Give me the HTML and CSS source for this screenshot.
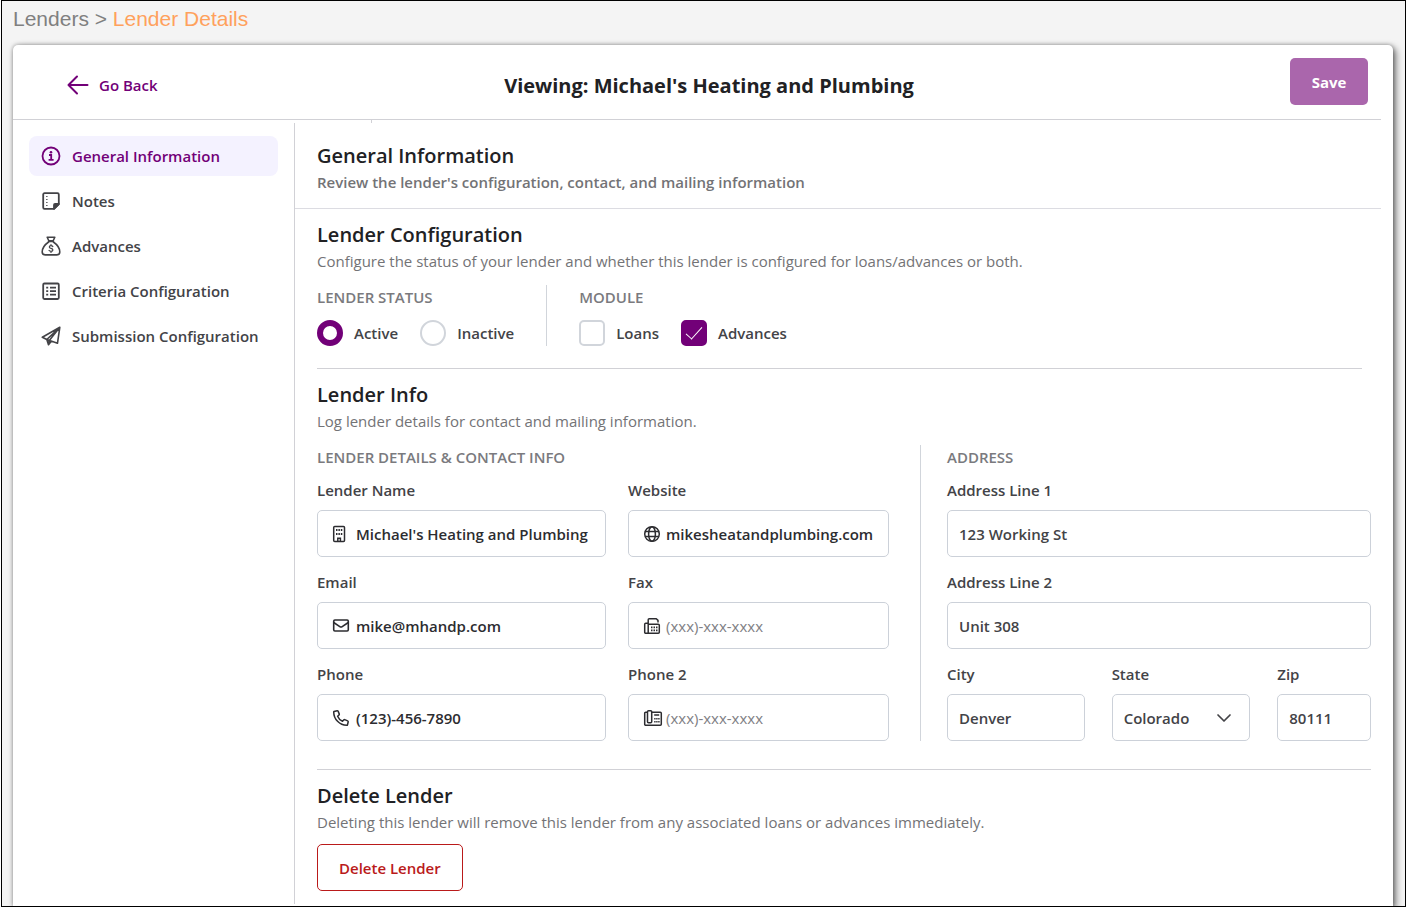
FILE: index.html
```
<!DOCTYPE html>
<html lang="en">

<head>
  <meta charset="utf-8">
  <title>Lender Details</title>
  <link rel="stylesheet" href="styles.css">
</head>

<body>
  <div class="window">
    <nav class="breadcrumb">
      <a href="#lenders">Lenders</a> &gt; <a href="#details" class="current">Lender Details</a>
    </nav>

    <div class="card">
      <header class="card-header">
        <a href="#lenders" class="go-back">
          <svg width="22" height="20" viewBox="0 0 22 20" fill="none" stroke="currentColor" stroke-width="2" stroke-linecap="round" stroke-linejoin="round"><path d="M20.5 10H1.5M10 1.5L1.5 10l8.500 8.500"/></svg>
          Go Back
        </a>
        <h1>Viewing: Michael's Heating and Plumbing</h1>
        <button type="button" class="save">Save</button>
      </header>

      <div class="card-body">
        <aside class="sidebar">
          <a href="#general" class="active">
            <svg width="20" height="20" viewBox="0 0 20 20" fill="none" stroke="currentColor" stroke-width="1.800"><circle cx="10" cy="10" r="8.500"/><circle cx="10" cy="6.200" r="1.300" fill="currentColor" stroke="none"/><path d="M8 9h2.200v4.800M7.600 13.800h5"/></svg>
            General Information
          </a>
          <a href="#notes">
            <svg width="20" height="20" viewBox="0 0 20 20" fill="none" stroke="currentColor" stroke-width="1.800" stroke-linejoin="round"><path d="M3.500 2.200h13a1.300 1.300 0 0 1 1.300 1.300v9.500l-4.800 4.800H3.500a1.300 1.300 0 0 1-1.300-1.300v-13a1.300 1.300 0 0 1 1.300-1.300z"/><path d="M17.800 13H14a1 1 0 0 0-1 1v3.800z" fill="currentColor"/><path d="M5.200 5.500h1.300M5.200 8.500h1.300M5.200 11.500h1.300M5.200 14.500h1.300" stroke-width="1.200"/></svg>
            Notes
          </a>
          <a href="#advances">
            <svg width="20" height="20" viewBox="0 0 20 20" fill="none" stroke="currentColor" stroke-width="1.600" stroke-linecap="round" stroke-linejoin="round"><path d="M6.200 1.200h7.600l-1.600 3.600H7.800zM7.600 5.500h4.800"/><path d="M7.600 6C4 8.500 1.200 12.200 1.200 16c0 2 1 2.900 3 2.900h11.600c2 0 3-.9 3-2.900 0-3.800-2.800-7.500-6.400-10"/><path d="M11.800 10.500c-.5-.6-1.100-.8-1.800-.8-1 0-1.700.5-1.700 1.300 0 2 3.600.8 3.600 2.900 0 .8-.8 1.400-1.900 1.400-.8 0-1.500-.3-2-.9M10 8.500v1.200M10 15.300v1.200" stroke-width="1.200"/></svg>
            Advances
          </a>
          <a href="#criteria">
            <svg width="20" height="20" viewBox="0 0 20 20" fill="none" stroke="currentColor" stroke-width="1.800"><rect x="2.200" y="2.500" width="15.600" height="15.500" rx="1.200"/><path d="M5.200 6.700h2M5.200 10.200h2M5.200 13.700h2M9 6.700h6M9 10.200h6M9 13.700h6"/></svg>
            Criteria Configuration
          </a>
          <a href="#submission">
            <svg width="20" height="20" viewBox="0 0 20 20" fill="none" stroke="currentColor" stroke-width="1.600" stroke-linejoin="round"><path d="M18.800 1.300L1.300 11.300l4.500 2.200L16.500 17.200zM18.800 1.300L5.800 13.500l1.700 5.200 3-3.600M18.800 1.300L8.300 14.500l-.8 4"/></svg>
            Submission Configuration
          </a>
        </aside>

        <main class="content">
          <div class="page-heading">
            <h2>General Information</h2>
            <p>Review the lender's configuration, contact, and mailing information</p>
          </div>

          <section class="configuration">
            <h2>Lender Configuration</h2>
            <p>Configure the status of your lender and whether this lender is configured for loans/advances or both.</p>
            <div class="options">
              <fieldset class="option-group">
                <legend>LENDER STATUS</legend>
                <div class="choices">
                  <label><input type="radio" name="status" checked> Active</label>
                  <label><input type="radio" name="status"> Inactive</label>
                </div>
              </fieldset>
              <fieldset class="option-group">
                <legend>MODULE</legend>
                <div class="choices">
                  <label><input type="checkbox"> Loans</label>
                  <label><input type="checkbox" checked> Advances</label>
                </div>
              </fieldset>
            </div>
          </section>

          <section class="info">
            <h2>Lender Info</h2>
            <p>Log lender details for contact and mailing information.</p>
            <div class="info-columns">
              <div class="contact">
                <h3>LENDER DETAILS &amp; CONTACT INFO</h3>
                <div class="contact-grid">
                  <div class="field">
                    <label for="name">Lender Name</label>
                    <div class="box">
                      <svg width="18" height="18" viewBox="0 0 18 18" fill="none" stroke="currentColor" stroke-width="1.500"><rect x="1.700" y="1.500" width="10.800" height="15" rx="1"/><path d="M5.800 16v-2.700h2.600V16"/><path d="M4 5h1.500M6.400 5h1.500M8.800 5h1.500M4 9h1.500M6.400 9h1.500M8.800 9h1.500" stroke-width="2"/></svg>
                      <input type="text" id="name" value="Michael's Heating and Plumbing">
                    </div>
                  </div>
                  <div class="field">
                    <label for="website">Website</label>
                    <div class="box near">
                      <svg width="18" height="18" viewBox="0 0 18 18" fill="none" stroke="currentColor" stroke-width="1.500"><circle cx="9" cy="9" r="7.300"/><ellipse cx="9" cy="9" rx="3.400" ry="7.300"/><path d="M2.300 6.500h13.400M2.300 11.500h13.400"/></svg>
                      <input type="text" id="website" value="mikesheatandplumbing.com">
                    </div>
                  </div>
                  <div class="field">
                    <label for="email">Email</label>
                    <div class="box">
                      <svg width="18" height="18" viewBox="0 0 18 18" fill="none" stroke="currentColor" stroke-width="1.600" stroke-linejoin="round"><rect x="1.700" y="3" width="14.600" height="11" rx="1.200"/><path d="M1.700 5.500L7.800 9.600a2 2 0 0 0 2.400 0l6.100-4.100"/></svg>
                      <input type="email" id="email" value="mike@mhandp.com">
                    </div>
                  </div>
                  <div class="field">
                    <label for="fax">Fax</label>
                    <div class="box near">
                      <svg width="18" height="18" viewBox="0 0 18 18" fill="none" stroke="currentColor" stroke-width="1.500" stroke-linejoin="round"><path d="M5.200 6.200H2.700a1 1 0 0 0-1 1v8a1 1 0 0 0 1 1h2.500zM5.200 16.200h10.100a1 1 0 0 0 1-1V8.200a1 1 0 0 0-1-1H5.200M5.200 7.200V2.700a1 1 0 0 1 1-1h7.100l1.700 1.700v2.200"/><path d="M8 10.300h1.500M10.500 10.300H12M13 10.300h1.500M8 13.300h1.500M10.500 13.300H12M13 13.300h1.500" stroke-width="1.700"/></svg>
                      <input type="tel" id="fax" placeholder="(xxx)-xxx-xxxx">
                    </div>
                  </div>
                  <div class="field">
                    <label for="phone">Phone</label>
                    <div class="box">
                      <svg width="18" height="18" viewBox="0 0 18 18" fill="none" stroke="currentColor" stroke-width="1.500" stroke-linejoin="round"><path d="M2 2.500l3.200-.8c.4-.1.700.1.900.4l1.200 3c.1.300 0 .6-.2.800L5.600 7.200c.9 2.200 2.500 4 4.900 5.100l1.400-1.500c.2-.2.500-.3.800-.2l3 1.300c.4.100.6.500.5.900l-.7 2.900c-.1.400-.4.600-.8.600C7.600 16.300 1.700 10.200 1.700 3c0-.2.100-.4.300-.5z"/></svg>
                      <input type="tel" id="phone" value="(123)-456-7890">
                    </div>
                  </div>
                  <div class="field">
                    <label for="phone2">Phone 2</label>
                    <div class="box near">
                      <svg width="18" height="18" viewBox="0 0 18 18" fill="none" stroke="currentColor" stroke-width="1.500" stroke-linejoin="round"><path d="M4.500 3.200H2.700a1 1 0 0 0-1 1v11a1 1 0 0 0 1 1h14.600a1 1 0 0 0 1-1V4.200a1 1 0 0 0-1-1H8.700"/><rect x="4.500" y="1.700" width="4.200" height="12" rx="1"/><path d="M11.200 6h5"/><path d="M11.200 9.700h1.400M13.200 9.700h1.400M15.200 9.700h1.400M11.200 12.700h1.400M13.200 12.700h1.400M15.200 12.700h1.400" stroke-width="1.500"/></svg>
                      <input type="tel" id="phone2" placeholder="(xxx)-xxx-xxxx">
                    </div>
                  </div>
                </div>
              </div>

              <div class="address">
                <h3>ADDRESS</h3>
                <div class="address-grid">
                  <div class="field wide">
                    <label for="line1">Address Line 1</label>
                    <div class="box"><input type="text" id="line1" value="123 Working St"></div>
                  </div>
                  <div class="field wide">
                    <label for="line2">Address Line 2</label>
                    <div class="box"><input type="text" id="line2" value="Unit 308"></div>
                  </div>
                  <div class="field">
                    <label for="city">City</label>
                    <div class="box"><input type="text" id="city" value="Denver"></div>
                  </div>
                  <div class="field">
                    <label for="state">State</label>
                    <div class="box">
                      <select id="state">
                        <option>Colorado</option>
                      </select>
                      <svg class="chevron" width="16" height="10" viewBox="0 0 16 10" fill="none" stroke="currentColor" stroke-width="1.700" stroke-linecap="round" stroke-linejoin="round"><path d="M2 2l6 6 6-6"/></svg>
                    </div>
                  </div>
                  <div class="field">
                    <label for="zip">Zip</label>
                    <div class="box"><input type="text" id="zip" value="80111"></div>
                  </div>
                </div>
              </div>
            </div>
          </section>

          <section class="delete">
            <h2>Delete Lender</h2>
            <p>Deleting this lender will remove this lender from any associated loans or advances immediately.</p>
            <button type="button" class="delete-button">Delete Lender</button>
          </section>
        </main>
      </div>
    </div>
  </div>
</body>
</html>
```
FILE: styles.css
```
* {
  box-sizing: border-box;
}

body {
  margin: 0 1px;
  background: white;
  color: #434347;
  font-family: "Open Sans", "Noto Sans", sans-serif;
  font-size: 15px;
  font-weight: 600;
  line-height: 20px;
}

h1, h2, h3, p {
  margin: 0;
}

a {
  color: inherit;
  text-decoration: none;
}

svg {
  flex: none;
  overflow: visible;
}

input, select, button {
  font: inherit;
  color: inherit;
}

.window {
  height: 100vh;
  display: flex;
  flex-direction: column;
  border: 1px solid black;
  background: #f4f4f4;
  overflow: hidden;
}

.breadcrumb {
  padding: 6px 11px 14px;
  font-family: "Liberation Sans", Arial, sans-serif;
  font-size: 21px;
  font-weight: 400;
  line-height: 24px;
  color: #808080;
}
.breadcrumb .current {
  color: #ffa15c;
}

.card {
  flex: 1;
  display: flex;
  flex-direction: column;
  margin: 0 12px 0 11px;
  background: white;
  border-radius: 5px 5px 0 0;
  box-shadow: 3px 3px 7px rgba(0, 0, 0, 0.5), 0 0 4px rgba(0, 0, 0, 0.35);
}

.card-header {
  display: grid;
  grid-template-columns: 1fr auto 1fr;
  align-items: center;
  margin-right: 12px;
  padding: 13px 13px 14px 37px;
  border-bottom: 1px solid #d1d1d6;
}
.card-header h1 {
  font-size: 20px;
  font-weight: 700;
  line-height: 28px;
  padding-top: 8px;
  color: #212124;
}
.go-back {
  display: flex;
  align-items: center;
  gap: 10px;
  padding: 6px 17px 0;
  color: #720078;
}
.save {
  justify-self: end;
  width: 78px;
  height: 47px;
  border: 0;
  border-radius: 5px;
  background: #aa66ac;
  color: white;
  font-weight: 700;
}

.card-body {
  position: relative;
  flex: 1;
  display: flex;
  padding: 3px 12px 2px 0;
}
/* short tick hanging from the header line */
.card-body::before {
  content: "";
  position: absolute;
  top: 0;
  left: 358px;
  height: 3px;
  border-left: 1px solid #d1d1d6;
}

.sidebar {
  width: 282px;
  display: flex;
  flex-direction: column;
  gap: 5px;
  padding: 13px 16px;
  border-right: 1px solid #d1d1d6;
}
.sidebar a {
  display: flex;
  align-items: center;
  gap: 11px;
  height: 40px;
  padding: 0 12px;
  border-radius: 8px;
}
.sidebar .active {
  background: #f4f2ff;
  color: #720078;
}

.content {
  flex: 1;
}
.content h2 {
  font-size: 20px;
  font-weight: 600;
  line-height: 28px;
  color: #212124;
}
.content p {
  line-height: 24px;
  font-weight: 400;
  color: #737376;
}

.page-heading {
  padding: 19px 22px 14px;
  border-bottom: 1px solid #dcdce2;
}
.content .page-heading p {
  font-weight: 600;
}

.configuration {
  margin: 0 19px 0 22px;
  padding: 12px 0 22px;
  border-bottom: 1px solid #d1d1d6;
}
.options {
  display: flex;
  margin-top: 12px;
}
.option-group {
  margin: 0;
  padding: 0 32px 0 0;
  border: 0;
}
.option-group + .option-group {
  padding-left: 32px;
  border-left: 1px solid #d1d5db;
}
legend, h3 {
  padding: 0;
  font-size: 15px;
  font-weight: 600;
  line-height: 24px;
  color: #7a7a7e;
}
/* floated so that the fieldset border starts above it */
legend {
  float: left;
}
.choices {
  clear: both;
  display: flex;
  gap: 22px;
  padding-top: 11px;
}
.choices label {
  display: flex;
  align-items: center;
  gap: 11px;
}
.choices input {
  appearance: none;
  width: 26px;
  height: 26px;
  margin: 0;
  border: 2px solid #d1d5db;
  border-radius: 5px;
}
.choices input[type=radio] {
  border-radius: 50%;
}
.choices input[type=radio]:checked {
  border: 6px solid #720078;
}
.choices input[type=checkbox]:checked {
  border-color: #720078;
  background: #720078;
  display: grid;
  place-items: center;
}
.choices input[type=checkbox]:checked::before {
  content: "";
  width: 7px;
  height: 15px;
  margin-bottom: 5px;
  border: solid white;
  border-width: 0 1px 1px 0;
  transform: rotate(42deg);
}

.info {
  margin: 0 10px 0 22px;
  padding: 12px 0 28px;
  border-bottom: 1px solid #d1d1d6;
}
.info-columns {
  display: flex;
  margin-top: 12px;
}
.contact {
  flex: 572;
  padding-right: 31px;
}
.contact-grid {
  display: grid;
  grid-template-columns: 289fr 261fr;
  gap: 14px 22px;
}
.address {
  flex: 424;
  padding-left: 26px;
  border-left: 1px solid #d1d5db;
}
.address-grid {
  display: grid;
  grid-template-columns: 138fr 139fr 94fr;
  gap: 14px 27px;
}
.wide {
  grid-column: 1 / -1;
}
.info h3 {
  padding-bottom: 10px;
}
.field {
  min-width: 0;
}
.field label {
  display: block;
  line-height: 22px;
  padding-bottom: 9px;
}
.box {
  position: relative;
  display: flex;
  align-items: center;
  gap: 6px;
  height: 47px;
  padding: 0 13px 0 14px;
  border: 1px solid #ccd1d9;
  border-radius: 5px;
  color: #2c2c30;
}
.box.near {
  gap: 5px;
}
.address .box {
  padding: 0 11px;
  color: #434347;
}
.box input, .box select {
  flex: 1;
  min-width: 0;
  width: 100%;
  height: 45px;
  margin: 0;
  padding: 0;
  border: 0;
  outline: 0;
  background: none;
}
.box select {
  appearance: none;
}
.box input::placeholder {
  font-weight: 400;
  color: #808084;
}
.chevron {
  position: absolute;
  right: 17px;
  pointer-events: none;
}

.delete {
  padding: 12px 22px;
}
.delete-button {
  height: 47px;
  margin-top: 10px;
  padding: 0 21px;
  border: 1px solid #ba1a1a;
  border-radius: 5px;
  background: white;
  color: #ba1a1a;
}
```
